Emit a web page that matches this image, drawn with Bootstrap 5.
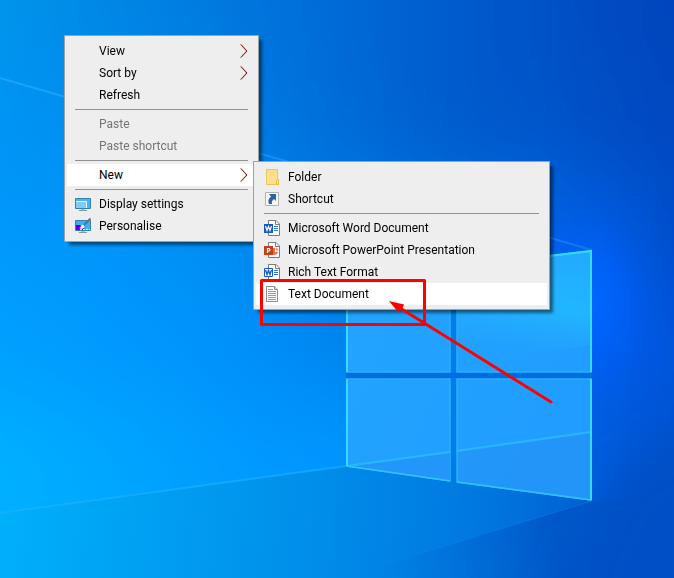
<!DOCTYPE html>
<html lang="en">
<head>
<meta charset="utf-8">
<meta name="viewport" content="width=device-width, initial-scale=1">
<title>Desktop</title>
<link href="https://cdn.jsdelivr.net/npm/bootstrap@5.3.0/dist/css/bootstrap.min.css" rel="stylesheet">
<style>
  body { font-family: Roboto, "Open Sans", sans-serif; font-size: 12px; line-height: 22px; background: #0078e0; }
  .desktop-area { min-height: 100vh; }
  .ctx-menu {
    --bs-dropdown-font-size: 12px;
    --bs-dropdown-bg: #eeeeee;
    --bs-dropdown-border-color: #a0a0a0;
    --bs-dropdown-border-radius: 0;
    --bs-dropdown-padding-x: 2px;
    --bs-dropdown-padding-y: 4px;
    --bs-dropdown-link-color: #000;
    --bs-dropdown-link-hover-color: #000;
    --bs-dropdown-link-hover-bg: #fff;
    --bs-dropdown-link-disabled-color: #757575;
    --bs-dropdown-item-padding-x: 8px;
    --bs-dropdown-item-padding-y: 0;
    --bs-dropdown-divider-bg: #919191;
    --bs-dropdown-divider-margin-y: 3px;
    min-width: 195px;
    box-shadow: 4px 4px 3px -1px rgba(0, 0, 0, .5);
  }
  .ctx-menu .dropdown-divider { margin-left: 8px; margin-right: 8px; opacity: 1; }
  .ctx-menu .dropdown-item { display: flex; align-items: center; gap: 8px; line-height: 22px; }
  .ctx-menu .dropdown-item.opened { background: #fff; }
  .ctx-icon { width: 16px; height: 16px; flex: none; }
  .ctx-main { top: 35px; left: 64px; }
  .ctx-sub { top: -3px; left: 186px; min-width: 297px; }
  .marker-layer { z-index: 1100; }
</style>
</head>
<body>
<main class="desktop-area position-relative overflow-hidden">
  <svg class="position-absolute top-0 start-0 w-100 h-100" viewBox="0 0 674 578" preserveAspectRatio="xMidYMid slice" aria-hidden="true">
    <defs>
      <linearGradient id="r0"><stop offset="0" stop-color="#0694ea"/><stop offset=".17" stop-color="#0086e4"/><stop offset=".33" stop-color="#0078de"/><stop offset=".5" stop-color="#006ad6"/><stop offset=".67" stop-color="#005ccc"/><stop offset=".83" stop-color="#0050c4"/><stop offset="1" stop-color="#0044bc"/></linearGradient>
      <linearGradient id="r1"><stop offset="0" stop-color="#0094f4"/><stop offset=".17" stop-color="#008cee"/><stop offset=".33" stop-color="#007ee4"/><stop offset=".5" stop-color="#006cd8"/><stop offset=".67" stop-color="#005ccc"/><stop offset=".83" stop-color="#0052c8"/><stop offset="1" stop-color="#0048c0"/></linearGradient>
      <linearGradient id="r2"><stop offset="0" stop-color="#0098fc"/><stop offset=".17" stop-color="#0094fa"/><stop offset=".33" stop-color="#008cf2"/><stop offset=".5" stop-color="#007ce6"/><stop offset=".67" stop-color="#006ee0"/><stop offset=".83" stop-color="#0062e0"/><stop offset="1" stop-color="#004ecc"/></linearGradient>
      <linearGradient id="r3"><stop offset="0" stop-color="#00a0ff"/><stop offset=".17" stop-color="#0099fe"/><stop offset=".33" stop-color="#0092fa"/><stop offset=".5" stop-color="#0086f0"/><stop offset=".67" stop-color="#0074e4"/><stop offset=".83" stop-color="#0064f0"/><stop offset="1" stop-color="#0054dc"/></linearGradient>
      <linearGradient id="r4"><stop offset="0" stop-color="#00b0ff"/><stop offset=".17" stop-color="#00a6ff"/><stop offset=".33" stop-color="#009cff"/><stop offset=".5" stop-color="#0096ff"/><stop offset=".67" stop-color="#0080ea"/><stop offset=".83" stop-color="#0064e0"/><stop offset="1" stop-color="#0052d0"/></linearGradient>
      <radialGradient id="glow" gradientUnits="userSpaceOnUse" cx="590" cy="300" r="90" gradientTransform="translate(0 -150) scale(1 1.5)"><stop offset="0" stop-color="#0068ff"/><stop offset=".35" stop-color="#0062ff" stop-opacity=".65"/><stop offset=".7" stop-color="#005cf0" stop-opacity=".2"/><stop offset="1" stop-color="#0058e0" stop-opacity="0"/></radialGradient>
      <linearGradient id="floor" gradientUnits="userSpaceOnUse" x1="0" y1="510" x2="674" y2="578">
        <stop offset="0" stop-color="#00b0fb"/><stop offset=".45" stop-color="#008fea"/><stop offset=".7" stop-color="#0078e0"/><stop offset=".86" stop-color="#0062d4"/><stop offset="1" stop-color="#0050c8"/>
      </linearGradient>
      <linearGradient id="dark" gradientUnits="userSpaceOnUse" x1="380" y1="578" x2="560" y2="550"><stop offset="0" stop-color="#0070d8" stop-opacity="0"/><stop offset="1" stop-color="#0058c8"/></linearGradient>
      <linearGradient id="beam" gradientUnits="userSpaceOnUse" x1="0" y1="0" x2="592" y2="0"><stop offset="0" stop-color="#34b4ff" stop-opacity=".5"/><stop offset="1" stop-color="#1c90ff" stop-opacity=".5"/></linearGradient>
      <linearGradient id="pane" gradientUnits="userSpaceOnUse" x1="346" y1="300" x2="592" y2="400"><stop offset="0" stop-color="#22a4ff"/><stop offset="1" stop-color="#219cff"/></linearGradient>
      <linearGradient id="shine" gradientUnits="userSpaceOnUse" x1="560" y1="250" x2="540" y2="366"><stop offset="0" stop-color="#22aaff"/><stop offset=".5" stop-color="#22b6ff"/><stop offset="1" stop-color="#22a4ff" stop-opacity="0"/></linearGradient>
      <filter id="soft" filterUnits="userSpaceOnUse" x="-20" y="-20" width="720" height="620"><feGaussianBlur stdDeviation="0.7"/></filter>
      <filter id="blend" filterUnits="userSpaceOnUse" x="0" y="-200" width="674" height="980"><feGaussianBlur stdDeviation="0 42"/></filter>
      <filter id="wide" filterUnits="userSpaceOnUse" x="400" y="250" width="400" height="450"><feGaussianBlur stdDeviation="22"/></filter>
    </defs>
    <g filter="url(#blend)">
      <rect y="-200" width="674" height="258" fill="url(#r0)"/>
      <rect y="58" width="674" height="116" fill="url(#r1)"/>
      <rect y="174" width="674" height="116" fill="url(#r2)"/>
      <rect y="290" width="674" height="116" fill="url(#r3)"/>
      <rect y="406" width="674" height="374" fill="url(#r4)"/>
    </g>
    <path d="M0 513L346 466L592 501L620 505V578H0Z" fill="url(#floor)" filter="url(#soft)"/>
    <path d="M592 501L340 578H674V505Z" fill="url(#dark)" filter="url(#soft)"/>
    <path d="M610 480L720 400V640H540Z" fill="#0050c6" filter="url(#wide)"/>
    <rect width="674" height="578" fill="url(#glow)"/>
    <g fill="none" filter="url(#soft)">
      <path d="M0 78L592 250" stroke="url(#beam)" stroke-width="2"/>
      <path d="M0 513L346 466" stroke="#1eb2ff" stroke-width="2" opacity=".6"/>
      <path d="M592 501L340 578" stroke="#1484ea" opacity=".4"/>
    </g>
    <path d="M346 280L592 250V501L346 466Z" fill="#007ce8"/>
    <path d="M346 375.500H592" stroke="#006ce4" stroke-width="5"/>
    <g stroke="#28b0ff" stroke-width="1.500">
      <path d="M347 281L450 268V372H347Z" fill="url(#pane)"/>
      <path d="M457 267L591 251V372H457Z" fill="url(#pane)"/>
      <path d="M347 379H450V481L347 466Z" fill="url(#pane)"/>
      <path d="M457 379H591V500L457 482Z" fill="url(#pane)"/>
    </g>
    <path d="M457 267L591 251V345L457 366Z" fill="url(#shine)"/>
    <path d="M348 466L450 452V480Z M458 451L590 432V499L458 481Z" fill="#2494f8" opacity=".8"/>
    <path d="M347 466L450 452M457 451L591 432" stroke="#2cc4ff" stroke-width="2" opacity=".7" filter="url(#soft)"/>
    <path d="M347 466L450 481M457 482L591 500" stroke="#30c4ff" stroke-width="1.500"/>
    <path d="M347 281V372M347 379V466M457 267L591 251V372M591 379V500" fill="none" stroke="#36dcff" stroke-width="2"/>
  </svg>

  <nav aria-label="Desktop menu">
    <ul class="dropdown-menu ctx-menu ctx-main show">
      <li><button type="button" class="dropdown-item"><span class="ctx-icon"></span>View<svg class="ms-auto" width="8" height="14" viewBox="0 0 8 14" fill="none" aria-hidden="true"><path d="M.5 .5L6.500 7L.5 13.500" stroke="#e08030"/><path d="M1 .5L7 7L1 13.500" stroke="#6c1c2c"/></svg></button></li>
      <li><button type="button" class="dropdown-item"><span class="ctx-icon"></span>Sort by<svg class="ms-auto" width="8" height="14" viewBox="0 0 8 14" fill="none" aria-hidden="true"><path d="M.5 .5L6.500 7L.5 13.500" stroke="#e08030"/><path d="M1 .5L7 7L1 13.500" stroke="#6c1c2c"/></svg></button></li>
      <li><button type="button" class="dropdown-item"><span class="ctx-icon"></span>Refresh</button></li>
      <li><hr class="dropdown-divider"></li>
      <li><button type="button" class="dropdown-item" disabled><span class="ctx-icon"></span>Paste</button></li>
      <li><button type="button" class="dropdown-item" disabled><span class="ctx-icon"></span>Paste shortcut</button></li>
      <li><hr class="dropdown-divider"></li>
      <li class="position-relative">
        <button type="button" class="dropdown-item opened" aria-expanded="true"><span class="ctx-icon"></span>New<svg class="ms-auto" width="8" height="14" viewBox="0 0 8 14" fill="none" aria-hidden="true"><path d="M.5 .5L6.500 7L.5 13.500" stroke="#e08030"/><path d="M1 .5L7 7L1 13.500" stroke="#6c1c2c"/></svg></button>
        <ul class="dropdown-menu ctx-menu ctx-sub show">
          <li><button type="button" class="dropdown-item">
            <svg class="ctx-icon" viewBox="0 0 16 16" aria-hidden="true"><path d="M2.500 .5H13.500V10.500H14.500V15.500H2.500Z" fill="#ffe08a" stroke="#edc755"/><path d="M12.500 15V11.500L13.500 10.500H14.500V15.500Z" fill="#ffe9a4" stroke="#e9bd3d"/></svg>Folder</button></li>
          <li><button type="button" class="dropdown-item">
            <svg class="ctx-icon" viewBox="0 0 16 16" aria-hidden="true"><path d="M1.500 1.500H14.500V14.500H1.500Z" fill="#f6f8fa" stroke="#b0b4b8"/><path d="M5 3H12V10L10 8C8 9.500 7.500 11 8 13H5C3.500 10.500 4.500 7.500 7 5.500Z" fill="#31609f"/></svg>Shortcut</button></li>
          <li><hr class="dropdown-divider"></li>
          <li><button type="button" class="dropdown-item">
            <svg class="ctx-icon" viewBox="0 0 16 16" aria-hidden="true"><path d="M4.500 .5H12L15.500 4V15.500H4.500Z" fill="#fff" stroke="#7a7a7a"/><path d="M11.500 .5V4.500H15.500" fill="none" stroke="#7a7a7a"/><path d="M10 6.500H14M10 8.500H14M10 10.500H14" stroke="#2b7cd3"/><path d="M0 4H9V13H0Z" fill="#185abd"/><path d="M1.500 6L3 10.500L4.500 6.500L6 10.500L7.500 6" fill="none" stroke="#fff" stroke-width="1.200"/></svg>Microsoft Word Document</button></li>
          <li><button type="button" class="dropdown-item">
            <svg class="ctx-icon" viewBox="0 0 16 16" aria-hidden="true"><path d="M4.500 .5H12L15.500 4V15.500H4.500Z" fill="#fff" stroke="#7a7a7a"/><path d="M11.500 .5V4.500H15.500" fill="none" stroke="#7a7a7a"/><path d="M9 6V13C12 13 14 12 14 10H11V6Z" fill="#ed6c47"/><path d="M12 5.500A3 3 0 0 1 14.500 8.500H12Z" fill="#ff8f6b"/><path d="M0 4H9V13H0Z" fill="#c43e1c"/><path d="M3.500 11V6.500H5A1.300 1.300 0 0 1 5 9H3.500" fill="none" stroke="#fff" stroke-width="1.200"/></svg>Microsoft PowerPoint Presentation</button></li>
          <li><button type="button" class="dropdown-item">
            <svg class="ctx-icon" viewBox="0 0 16 16" aria-hidden="true"><path d="M4.500 .5H12L15.500 4V15.500H4.500Z" fill="#fff" stroke="#7a7a7a"/><path d="M11.500 .5V4.500H15.500" fill="none" stroke="#7a7a7a"/><path d="M10 6.500H14M10 8.500H14M10 10.500H14" stroke="#2b7cd3"/><path d="M.5 4.500H8.500V12.500H.5Z" fill="#fff" stroke="#185abd"/><path d="M1.500 6L3 10.500L4.500 6.500L6 10.500L7.500 6" fill="none" stroke="#185abd" stroke-width="1.400"/></svg>Rich Text Format</button></li>
          <li><button type="button" class="dropdown-item opened">
            <svg class="ctx-icon" viewBox="0 0 16 16" aria-hidden="true"><path d="M2.500 .5H10.500L13.500 3.500V15.500H2.500Z" fill="#fafafa" stroke="#8c8c8c"/><path d="M10.500 .5V3.500H13.500" fill="#ddd" stroke="#8c8c8c"/><path d="M4 3.500H9M4 5.500H12M4 7.500H12M4 9.500H12M4 11.500H12M4 13.500H12" stroke="#9c9c9c"/></svg>Text Document</button></li>
        </ul>
      </li>
      <li><hr class="dropdown-divider"></li>
      <li><button type="button" class="dropdown-item">
        <svg class="ctx-icon" viewBox="0 0 16 16" aria-hidden="true"><path d="M.5 2.500H15.500V12.500H.5Z" fill="#48b4f0" stroke="#3480b0"/><path d="M1 5.500H11.500V12" fill="#8cd4fa" stroke="#e4f6ff"/><path d="M1 6H11V12H1Z" fill="#80ccf6"/><path d="M6.500 13H9.500V14H6.500Z" fill="#a8b8c0"/><path d="M4 14.500H12" stroke="#8098a8"/></svg>Display settings</button></li>
      <li><button type="button" class="dropdown-item">
        <svg class="ctx-icon" viewBox="0 0 16 16" aria-hidden="true"><path d="M.5 2.500H15.500V12.500H.5Z" fill="#3cb0f4" stroke="#3480b0"/><path d="M1 7H5L7 9L10 11V12H1Z" fill="#5a00e8"/><path d="M5 11.500H15" stroke="#e8f8ff" stroke-dasharray="2 1"/><path d="M4 10C6 10 5.500 7.500 7.500 7C9.500 7 10 9 8.500 10.200C7.500 11 5 11 4 10Z" fill="#f4f8fa"/><path d="M9 7L15.500 .5" stroke="#687078" stroke-width="2"/><path d="M6.500 13H9.500V14H6.500Z" fill="#a8b8c0"/><path d="M4 14.500H12" stroke="#8098a8"/></svg>Personalise</button></li>
    </ul>
  </nav>

  <svg class="marker-layer position-absolute top-0 start-0 pe-none" width="674" height="578" viewBox="0 0 674 578" aria-hidden="true">
    <path d="M261.500 280.500H424.500V324.500H261.500Z" fill="none" stroke="#f00" stroke-width="3" stroke-linejoin="round"/>
    <path d="M400 308L551 402" stroke="#f00" stroke-width="3" stroke-linecap="round"/>
    <path d="M389 301L404 304.500L402.500 308L398 312Z" fill="#f00"/>
  </svg>
</main>
<script src="https://cdn.jsdelivr.net/npm/bootstrap@5.3.0/dist/js/bootstrap.bundle.min.js"></script>
</body>
</html>
